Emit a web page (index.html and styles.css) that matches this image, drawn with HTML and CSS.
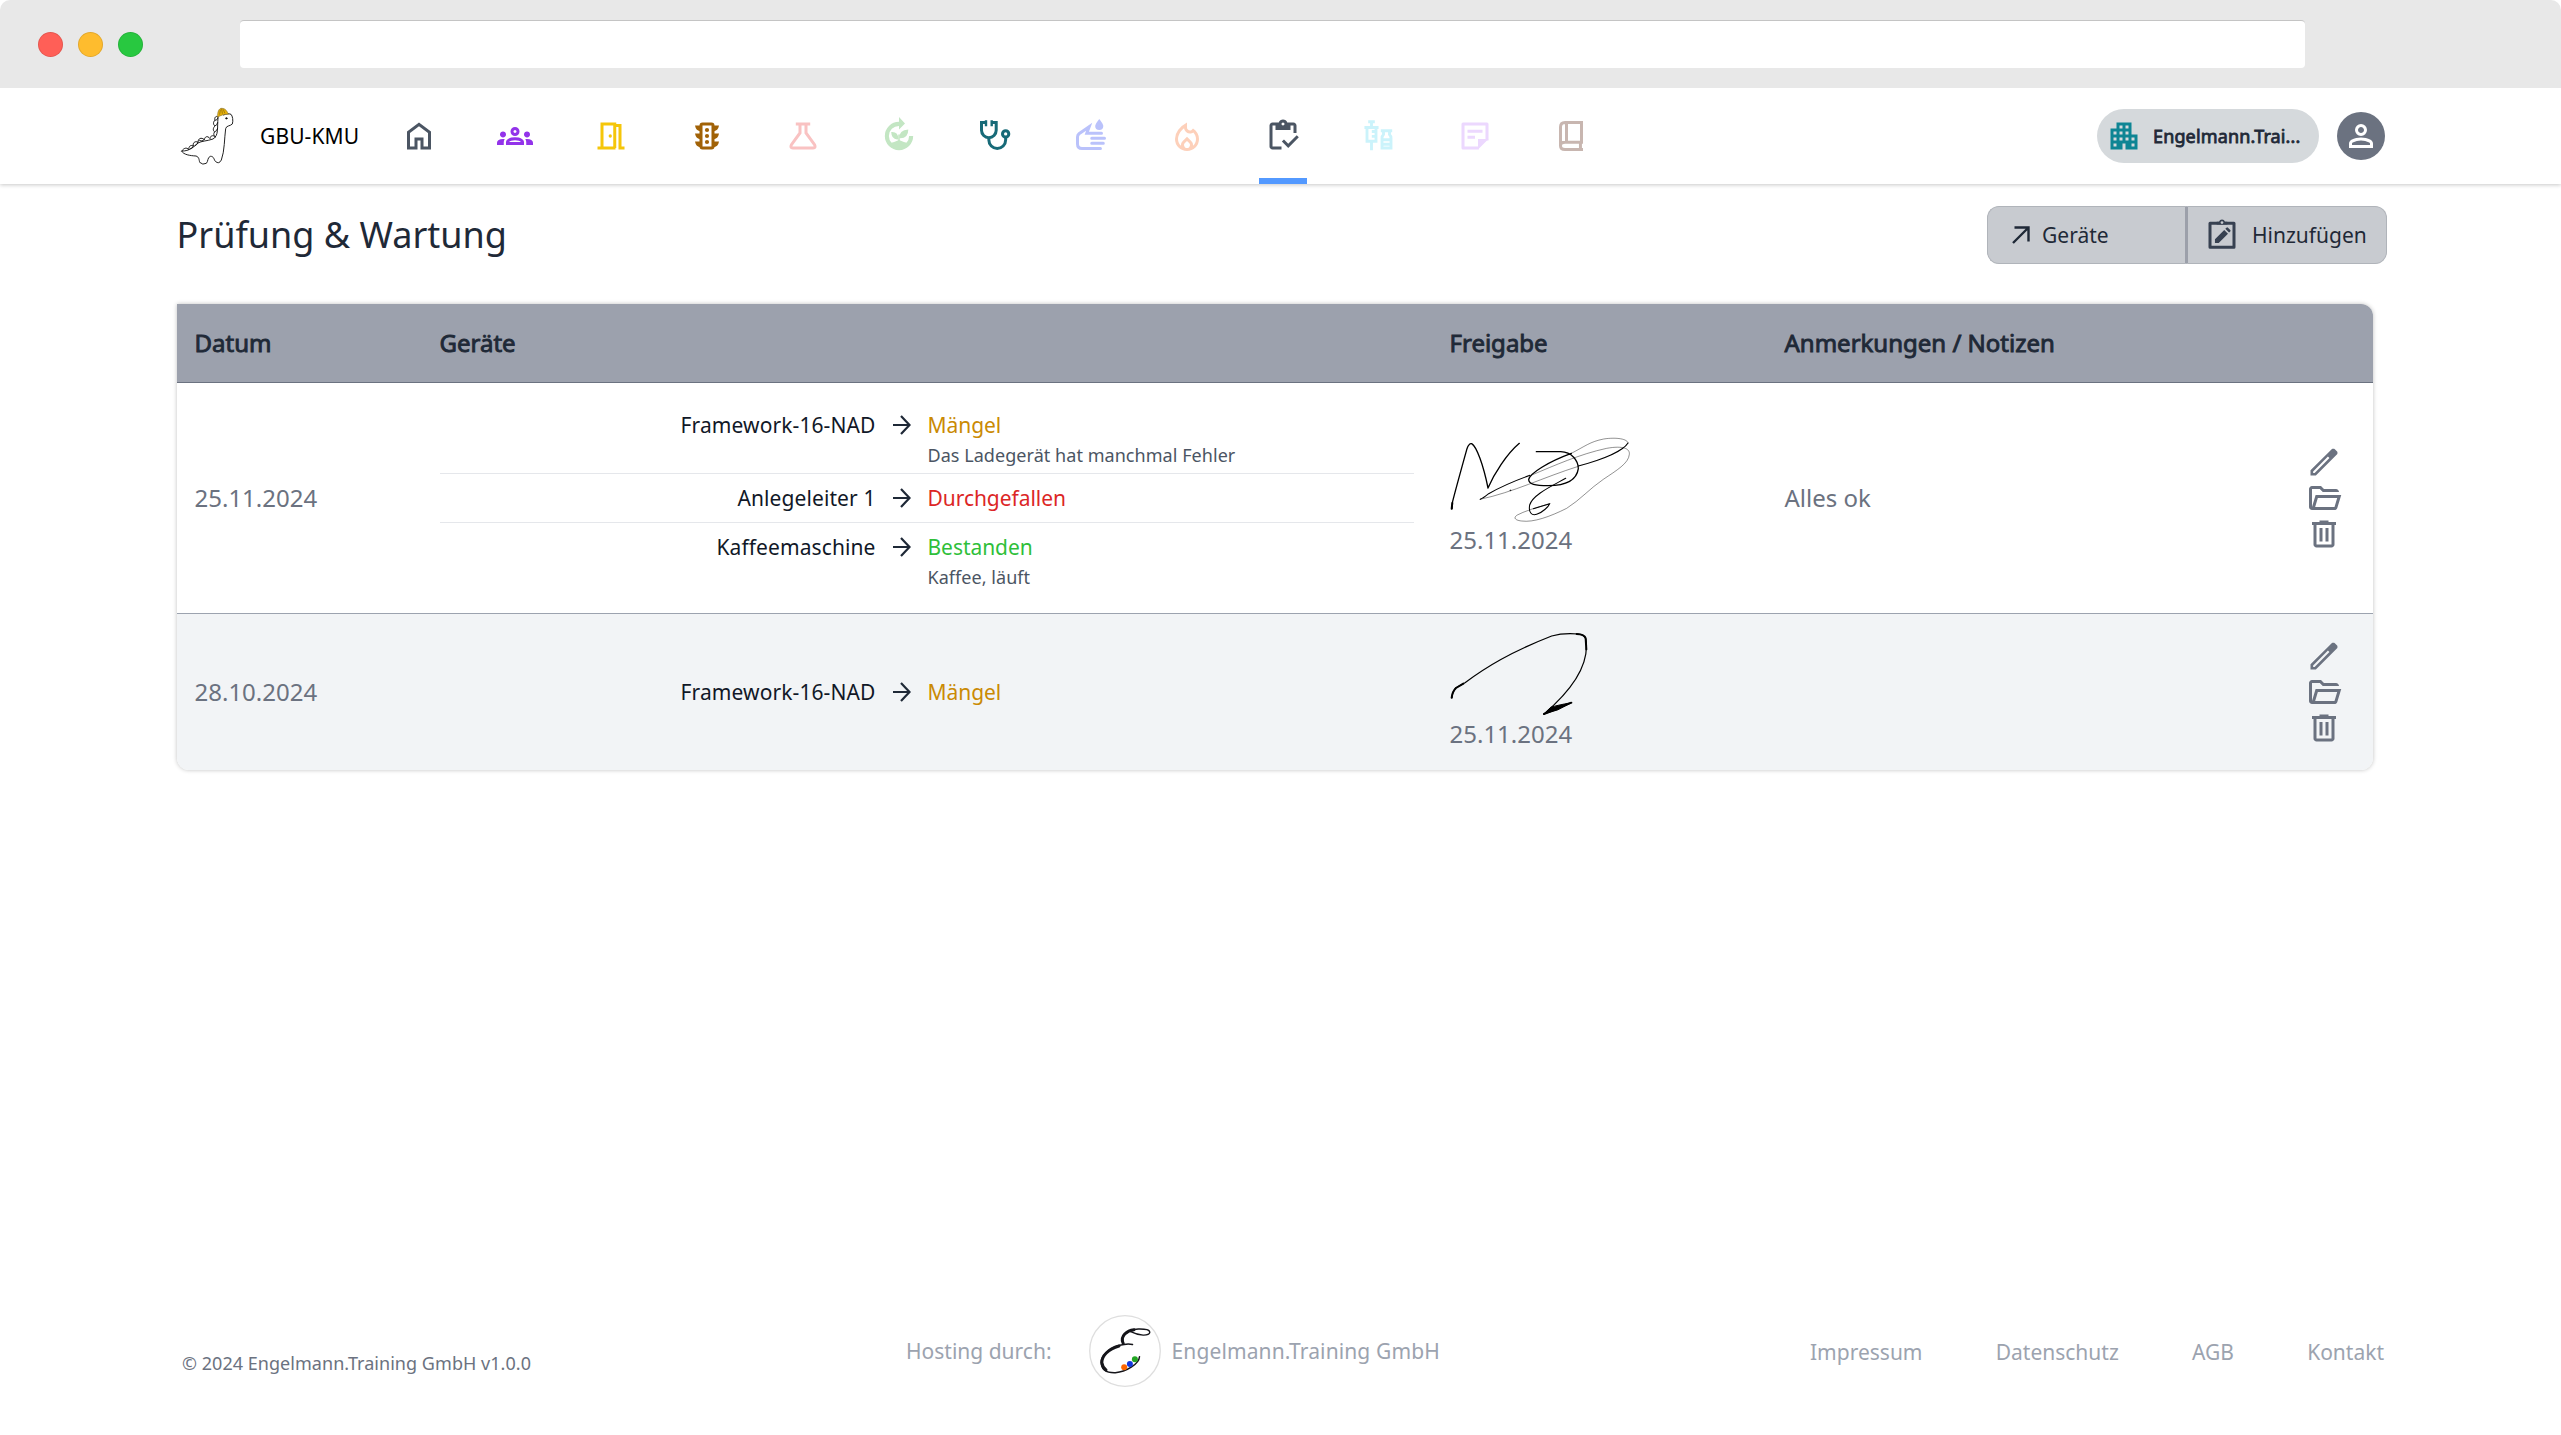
FILE: index.html
```html
<!DOCTYPE html>
<html lang="de">
<head>
<meta charset="utf-8">
<title>GBU-KMU – Prüfung &amp; Wartung</title>
<link rel="stylesheet" href="styles.css">
</head>
<body>
<svg class="sprite" aria-hidden="true">
  <symbol id="pencil" viewBox="0 -960 960 960"><path fill-rule="evenodd" d="M190-190h40l395-395-40-40-395 395v40Zm-70 70v-142l565-557q8-8 19-12.500t23-4.500q11 0 22 4.500t20 12.500l54 54q9 9 13 20t4 22q0 11-4.500 22.500T823-679L263-120H120Z"/></symbol>
  <symbol id="folder" viewBox="0 -960 960 960"><path d="M160-160q-33 0-56.500-23.500T80-240v-480q0-33 23.500-56.500T160-800h240l80 80h320q33 0 56.500 23.500T880-640H447l-80-80H160v480l96-320h684L837-217q-8 26-29.500 41.500T760-160H160Zm84-80h516l72-240H316l-72 240Z"/></symbol>
  <symbol id="trash" viewBox="0 -960 960 960"><path d="M280-120q-33 0-56.500-23.500T200-200v-520h-40v-80h200v-40h240v40h200v80h-40v520q0 33-23.500 56.500T680-120H280Zm400-600H280v520h400v-520ZM360-280h80v-360h-80v360Zm160 0h80v-360h-80v360Z"/></symbol>
  <symbol id="arrow" viewBox="0 0 18 20"><path class="outline" d="M0 10h16.500M8 1l8.500 9L8 19" stroke="currentColor" stroke-width="2.200"/></symbol>
</svg>
<div class="window">
  <div class="chrome">
    <div class="lights"><span class="red"></span><span class="yellow"></span><span class="green"></span></div>
    <div class="address"></div>
  </div>

  <header class="nav">
    <svg class="dino outline" viewBox="30 24 162 180" stroke="#111" stroke-width="2.800" stroke-linejoin="round" stroke-linecap="round">
      <path d="M144 60C141 90 147 112 129 123C112 129 94 129 84 135C72 146 58 160 35 159C40 170 60 173 78 174C88 177 87 186 89 193Q98 202 109 196C115 190 112 178 121 175C132 174 132 186 136 190Q147 200 154 186C164 160 163 120 167 92C169 82 180 85 187 78C190 68 188 54 183 49C176 46 168 47 161 51"/>
      <path d="M144 56C138 52 132 59 135 67C129 71 129 80 135 84C129 89 128 98 134 102C129 107 132 116 137 117C128 110 121 113 120 122C112 111 104 117 103 125C94 117 84 121 84 133C75 127 67 136 70 144C61 139 55 147 57 155C49 147 42 150 35 159M135 67C141 67 144 62 144 57M135 84Q142 82 143 74M134 102Q141 99 143 91M103 125Q96 132 89 128M84 133Q82 141 75 143M70 144Q68 152 62 152"/>
      <path fill="#eab308" stroke="#8a7433" stroke-width="2" d="M143 57C142 42 147 30 155 31C167 31 172 41 175 49C162 47 154 52 143 57Z"/>
      <path stroke="#7c6114" stroke-width="2" d="M149 49l2-13M157 46l-2-13M164 44l-4-9"/>
      <circle cx="169" cy="61" r="2" fill="#111"/>
    </svg>
    <span class="brand">GBU-KMU</span>
    <nav class="menu">
      <a class="c-slate"><svg viewBox="0 -960 960 960"><path d="M240-200h120v-240h240v240h120v-360L480-740 240-560v360Zm-80 80v-480l320-240 320 240v480H520v-240h-80v240H160Z"/></svg></a>
      <a class="c-purple"><svg viewBox="0 -960 960 960"><path d="M0-240v-63q0-43 44-70t116-27q13 0 25 .500t23 2.500q-14 21-21 44t-7 48v65H0Zm240 0v-65q0-32 17.500-58.500T307-410q32-20 76.500-30t96.500-10q53 0 97.500 10t76.500 30q32 20 49 46.500t17 58.500v65H240Zm540 0v-65q0-26-6.500-49T754-397q11-2 22.500-2.500t23.500-.500q72 0 116 26.500t44 70.500v63H780Zm-455-80h311q-10-20-55.500-35T480-370q-55 0-100.500 15T325-320ZM160-440q-33 0-56.500-23.500T80-520q0-34 23.500-57t56.500-23q34 0 57 23t23 57q0 33-23 56.500T160-440Zm640 0q-33 0-56.500-23.500T720-520q0-34 23.500-57t56.500-23q34 0 57 23t23 57q0 33-23 56.500T800-440Zm-320-40q-50 0-85-35t-35-85q0-51 35-85.500t85-34.500q51 0 85.500 34.500T600-600q0 50-34.500 85T480-480Zm0-80q17 0 28.500-11.500T520-600q0-17-11.500-28.500T480-640q-17 0-28.500 11.500T440-600q0 17 11.500 28.500T480-560Z"/></svg></a>
      <a class="c-yellow"><svg class="line" viewBox="0 0 24 24"><path d="M3 20h12M6 20V4h8.500v16M14.500 5H18v15h3"/><circle class="dot" cx="11.500" cy="12" r="1.100"/></svg></a>
      <a class="c-brown"><svg class="line" viewBox="0 0 24 24"><rect x="8" y="4" width="8" height="16" rx="1"/><path class="dot" d="M4 5h4v4Q4.500 8.500 4 5ZM4 10.300h4v4Q4.500 13.800 4 10.300ZM4 15.600h4v4Q4.500 19.100 4 15.600ZM20 5h-4v4Q19.500 8.500 20 5ZM20 10.300h-4v4Q19.500 13.800 20 10.300ZM20 15.600h-4v4Q19.500 19.100 20 15.600Z"/><circle class="dot" cx="12" cy="8" r="1.400"/><circle class="dot" cx="12" cy="12" r="1.400"/><circle class="dot" cx="12" cy="16" r="1.400"/></svg></a>
      <a class="c-pink"><svg class="line" viewBox="0 0 24 24"><path d="M7.200 4h9.600M10 4v6L4.300 17.800Q3.300 20 5.200 20h13.600Q20.700 20 19.700 17.800L14 10V4"/></svg></a>
      <a class="c-green"><svg class="line" viewBox="0 0 24 24"><path d="M12 3.900A8.100 8.100 0 1 0 20.100 12" stroke-width="2.700"/><path class="dot" d="M12-.6L16 3.600 12 7.700ZM5 17Q9 16 12 14.600Q15 16 19 17Q16 21 12 21T5 17ZM11.600 14.200Q7 14.800 6.800 9.400Q11.600 9 11.600 14.200ZM12.200 13.400Q11.900 8 18.200 7.600Q18.200 13.800 12.200 13.400Z"/><path d="M12 11v5" stroke-width="1"/></svg></a>
      <a class="c-teal"><svg class="line" viewBox="0 0 24 24"><path d="M6.600 3H3v5.200a4.900 4.900 0 0 0 9.800 0V3H9.300M7.900 13v1.700a5.600 5.600 0 0 0 11.200 0V12.500"/><path d="M6 1.500v4M9.800 1.500v4" stroke-width="1.600"/><circle cx="19.100" cy="10.600" r="2.100"/></svg></a>
      <a class="c-indigo"><svg class="line" viewBox="0 0 24 24" stroke-linecap="round"><path d="M18.300 20.400H6q-3 0-3-3v-4.700q0-1.400 1-2.200L10.800 5.800 9.200 10.100H19M12.500 13.500H21M12.500 16.900H20.200"/><path class="dot" d="M17.500.6Q20.200 4 20.200 5.300A2.700 2.700 0 0 1 14.800 5.300Q14.800 4 17.500.6Z"/></svg></a>
      <a class="c-orange"><svg viewBox="0 -960 960 960"><path d="M240-400q0 52 21 98.500t60 81.500q-1-5-1-9v-9q0-32 12-60t35-51l113-111 113 111q23 23 35 51t12 60v9q0 4-1 9 39-35 60-81.500t21-98.500q0-50-18.500-94.500T648-574q-20 13-42 19.500t-45 6.500q-62 0-107.500-41T401-690q-39 33-69 68.500t-50.500 72Q261-513 250.500-475T240-400Zm240 52-57 56q-11 11-17 25t-6 29q0 32 23.500 55t56.500 23q33 0 56.500-23t23.500-55q0-16-6-29.500T537-292l-57-56Zm0-492v132q0 34 23.500 57t57.500 23q18 0 33.500-7.500T622-658l18-22q74 42 117 117t43 163q0 134-93 227T480-80q-134 0-227-93t-93-227q0-129 86.500-245T480-840Z"/></svg></a>
      <a class="c-slate active"><svg viewBox="0 -960 960 960"><path d="M620-163 450-333l56-56 114 114 226-226 56 56-282 282Zm220-397h-80v-200h-80v120H280v-120h-80v560h240v80H200q-33 0-56.500-23.500T120-200v-560q0-33 23.500-56.500T200-840h167q11-35 43-57.500t70-22.500q40 0 71.500 22.500T594-840h166q33 0 56.500 23.500T840-760v200ZM480-760q17 0 28.500-11.500T520-800q0-17-11.500-28.500T480-840q-17 0-28.500 11.500T440-800q0 17 11.500 28.500T480-760Z"/></svg></a>
      <a class="c-cyan"><svg class="line" viewBox="0 0 24 24"><path d="M4.800 2.500h4.400M7 2.500V6M2.300 6.300h9.400M4 6.300v9.200h6V6.300M7 15.500v6M10 9H7.200M10 12.200H7.200M13.200 8.500h7.600M15 9v2q-1 1-1 2.300V20h6v-6.700q0-1.300-1-2.300V9M14 14.500h6M14 17.500h6" stroke-width="1.900"/></svg></a>
      <a class="c-lilac"><svg class="line" viewBox="0 0 24 24"><path d="M14.500 20H4V4h16v11" stroke-linejoin="round"/><path class="dot" d="M14 21v-7h7z"/><path d="M7 8.800h10M7 12.800h5"/></svg></a>
      <a class="c-taupe"><svg class="line" viewBox="0 0 24 24"><path d="M20 3H8Q5 3 5 6v12.500Q5 21 8 21h12M9 3v13M19 3v13.200M20 16.200H8Q5 16.200 5 18.500M18.300 16v5"/></svg></a>
    </nav>
    <div class="company">
      <svg viewBox="0 -960 960 960"><path d="M120-120v-560h160v-160h400v320h160v400H520v-160h-80v160H120Zm80-80h80v-80h-80v80Zm0-160h80v-80h-80v80Zm0-160h80v-80h-80v80Zm160 160h80v-80h-80v80Zm0-160h80v-80h-80v80Zm0-160h80v-80h-80v80Zm160 320h80v-80h-80v80Zm0-160h80v-80h-80v80Zm0-160h80v-80h-80v80Zm160 480h80v-80h-80v80Zm0-160h80v-80h-80v80Z"/></svg>
      <span>Engelmann.Trai...</span>
    </div>
    <div class="avatar"><svg viewBox="0 -960 960 960"><path d="M480-480q-66 0-113-47t-47-113q0-66 47-113t113-47q66 0 113 47t47 113q0 66-47 113t-113 47ZM160-160v-112q0-34 17.500-62.500T224-378q62-31 126-46.500T480-440q66 0 130 15.500T736-378q29 15 46.500 43.500T800-272v112H160Zm80-80h480v-32q0-11-5.500-20T700-306q-54-27-109-40.500T480-360q-56 0-111 13.500T260-306q-9 5-14.500 14t-5.500 20v32Zm240-320q33 0 56.500-23.500T560-640q0-33-23.500-56.500T480-720q-33 0-56.500 23.500T400-640q0 33 23.500 56.500T480-560Z"/></svg></div>
  </header>

  <div class="titlebar">
    <h1>Prüfung &amp; Wartung</h1>
    <div class="actions">
      <button class="devices"><svg class="outline" viewBox="0 0 18 18" stroke="currentColor" stroke-width="2.400"><path d="M1 17L16 2M2.500 1.500H16.500V15.500"/></svg>Geräte</button>
      <button class="add"><svg viewBox="0 0 24 24"><path class="outline" d="M4 4.200h16v16h-16z" stroke="currentColor" stroke-width="2" stroke-linejoin="round"/><path d="M8.500 5V3.200h1.500a2.100 2.100 0 0 1 4 0H15.500V5z"/><circle cx="12" cy="3.700" r=".9" fill="#c8cbd0"/><path d="M7.300 17.300v-2.500L13.500 8.600l2.500 2.500-6.200 6.200zM14.200 7.900l.8-.8q.5-.5 1 0l1.500 1.500q.5.500 0 1l-.8.800z"/></svg>Hinzufügen</button>
    </div>
  </div>

  <main class="table">
    <div class="row head"><div>Datum</div><div>Geräte</div><div>Freigabe</div><div>Anmerkungen / Notizen</div><div></div></div>
    <div class="row">
      <div>25.11.2024</div>
      <div class="items">
        <div class="item noted"><span class="name">Framework-16-NAD</span><svg><use href="#arrow"/></svg><span class="state warn">Mängel</span><span class="note">Das Ladegerät hat manchmal Fehler</span></div>
        <div class="item"><span class="name">Anlegeleiter 1</span><svg><use href="#arrow"/></svg><span class="state fail">Durchgefallen</span></div>
        <div class="item noted"><span class="name">Kaffeemaschine</span><svg><use href="#arrow"/></svg><span class="state pass">Bestanden</span><span class="note">Kaffee, läuft</span></div>
      </div>
      <div class="sign">
        <svg class="outline" viewBox="90 114 600 252" stroke="#000" stroke-linecap="round" stroke-linejoin="round">
          <path stroke-width="4" d="M96 326L97 308C104 280 119 225 141 146Q147 129 155 131C170 140 190 195 204 264C222 222 260 162 298 130M349 155L422 155C455 156 475 181 475 206C470 240 442 257 385 257C345 257 326 253 326 238C330 220 385 185 454 160"/>
          <path stroke-width="6" d="M95 326L97 309"/>
          <path stroke-width="1.300" d="M454 160C495 139 510 125 551 117C590 111 624 117 624 129M180 298C280 277 370 232 475 199M340 223C400 198 480 162 560 145C610 136 630 146 628 163C626 190 590 211 550 238C510 265 480 300 440 325C390 350 340 368 305 363C285 361 279 353 292 345Q320 330 390 311"/>
          <path stroke-width="3.200" d="M624 129C610 152 550 178 475 198M181 298Q190 294 206 281Q260 251 330 226M437 235C390 261 338 285 329 315C325 337 335 348 350 343C370 336 385 320 389 311L340 326"/>
          <circle cx="271" cy="271" r="1.500" fill="#000"/>
        </svg>
        <span>25.11.2024</span>
      </div>
      <div>Alles ok</div>
      <div class="tools"><svg><use href="#pencil"/></svg><svg><use href="#folder"/></svg><svg><use href="#trash"/></svg></div>
    </div>
    <div class="row alt">
      <div>28.10.2024</div>
      <div class="items">
        <div class="item"><span class="name">Framework-16-NAD</span><svg><use href="#arrow"/></svg><span class="state warn">Mängel</span></div>
      </div>
      <div class="sign">
        <svg class="outline" viewBox="90 696 600 252" stroke="#000" stroke-linecap="round" stroke-linejoin="round">
          <path stroke-width="3.600" d="M96 893Q97 875 108 863L135 848C200 800 270 757 395 708Q430 698 475 702Q500 704 499 730C504 800 450 875 372 942"/>
          <path stroke-width="6" d="M95 893Q97 875 108 864L130 851M470 702Q494 703 497 715L499 748M454 908L372 942"/>
          <path fill="#000" stroke-width="3" d="M454 908Q410 916 392 922L372 942L412 930Z"/>
        </svg>
        <span>25.11.2024</span>
      </div>
      <div></div>
      <div class="tools"><svg><use href="#pencil"/></svg><svg><use href="#folder"/></svg><svg><use href="#trash"/></svg></div>
    </div>
  </main>

  <footer class="footer">
    <div class="copy">© 2024 Engelmann.Training GmbH v1.0.0</div>
    <div class="host">
      <span>Hosting durch:</span>
      <svg class="outline" viewBox="0 0 72 72" stroke="#15151a" stroke-linecap="round">
        <circle cx="36" cy="36" r="35.300" stroke="#dedede" stroke-width="1.300"/>
        <path stroke-width="1.500" d="M43.500 29.500Q39 28.500 35.200 29.500C22 31 12.200 40 12.200 47.500C12.500 55 18 58 26.400 57.700C37 57 50 49 50.500 41.700"/>
        <path stroke-width="3" d="M30 31C19 34 12.800 41 12.800 47.500Q13.500 52.500 17 55M34 28C31 21 38 15.500 45 14.700"/>
        <path stroke-width="1.300" d="M35 29C31 21 38 14.500 49.300 14C57 13.800 60.800 15 60.800 17.500C60 21 50 21 41.700 16.700"/>
        <g stroke="none"><circle cx="35.200" cy="52.300" r="3" fill="#f60"/><circle cx="40.900" cy="49" r="3" fill="#1238e0"/><circle cx="45.900" cy="44.300" r="3" fill="#22a522"/></g>
      </svg>
      <span class="firm">Engelmann.Training GmbH</span>
    </div>
    <div class="links"><a>Impressum</a><a>Datenschutz</a><a>AGB</a><a>Kontakt</a></div>
  </footer>
</div>
</body>
</html>
```
FILE: styles.css
```css
* { box-sizing: border-box; }
body {
  margin: 0;
  background: #fff;
  font-family: "Noto Sans", sans-serif;
  font-size: 24px;
  line-height: 36px;
  color: #1f2937;
}
svg { display: block; fill: currentColor; flex: none; }
.outline { fill: none; }
.sprite { position: absolute; width: 0; height: 0; }
.window {
  width: 2561px;
  height: 1435px;
  display: flex;
  flex-direction: column;
  overflow: hidden;
  border-radius: 10px;
}

/* browser frame */
.chrome {
  position: relative;
  z-index: 1;
  height: 88px;
  flex: none;
  background: #e8e8e8;
  display: flex;
  align-items: center;
  padding-left: 37.5px;
}
.lights { display: flex; gap: 15px; width: 202.5px; }
.lights span { width: 25px; height: 25px; border-radius: 50%; border: 1px solid rgba(0, 0, 0, .1); }
.red { background: #ff5f57; }
.yellow { background: #febc2e; }
.green { background: #28c840; }
.address { width: 2065px; height: 48px; background: #fff; border-radius: 4px; border-top: 1px solid #c4c4c4; }

/* navigation */
.nav {
  height: 96px;
  flex: none;
  display: flex;
  align-items: center;
  padding: 0 176px 0 180px;
  box-shadow: 0 1px 4px rgba(0, 0, 0, .22);
}
.dino { width: 54px; height: 60px; }
.brand { font-size: 21px; color: #000; margin-left: 26px; width: 135px; letter-spacing: .1px; }
.menu { display: flex; gap: 48px; height: 96px; }
.menu a { width: 48px; display: flex; align-items: center; justify-content: center; border-top: 6px solid transparent; border-bottom: 6px solid transparent; }
.menu svg { width: 36px; height: 36px; }
.menu .active { border-bottom-color: #5399ff; }
.line { fill: none; stroke: currentColor; stroke-width: 2; overflow: visible; }
.line .dot { fill: currentColor; stroke: none; }
.c-slate { color: #4b5563; }
.c-purple { color: #9333ea; }
.c-yellow { color: #f5c60a; }
.c-brown { color: #a16207; }
.c-pink { color: #f9c2c2; }
.c-green { color: #c3e6c3; }
.c-teal { color: #176a78; }
.c-indigo { color: #bac2fb; }
.c-orange { color: #fdd0ba; }
.c-cyan { color: #cbf3fb; }
.c-lilac { color: #ecd8fe; }
.c-taupe { color: #c8b6b0; }
.company {
  margin-left: auto;
  width: 222px;
  height: 54px;
  border-radius: 27px;
  background: #d5d9dc;
  display: flex;
  align-items: center;
  gap: 11px;
  padding-left: 9px;
  font-size: 18px;
  letter-spacing: .14px;
  -webkit-text-stroke: .8px;
}
.company svg { width: 36px; height: 36px; color: #0e8594; }
.avatar {
  margin-left: 18px;
  width: 48px;
  height: 48px;
  border-radius: 50%;
  background: #6b7280;
  color: #fff;
  display: flex;
  align-items: center;
  justify-content: center;
}
.avatar svg { width: 36px; height: 36px; }

/* page title */
.titlebar {
  display: flex;
  justify-content: space-between;
  align-items: center;
  height: 58px;
  flex: none;
  margin: 22px 174px 40px 176.5px;
}
h1 { margin: 0; font-size: 36px; font-weight: 400; }
.actions { display: flex; height: 58px; }
.actions button {
  display: flex;
  align-items: center;
  width: 200px;
  padding: 0 0 0 24px;
  background: #c8cbd0;
  border: 1px solid #b0b4ba;
  font: 21px/30px "Noto Sans", sans-serif;
  color: #1f2937;
}
.actions .devices { border-radius: 12px 0 0 12px; border-right: 2px solid #9ca0aa; gap: 12px; }
.actions .add { border-radius: 0 12px 12px 0; border-left: 1px solid #9ca0aa; padding-left: 16px; gap: 12px; }
.devices svg { width: 18px; height: 18px; }
.add svg { width: 36px; height: 36px; color: #374151; }

/* inspections table */
.table {
  width: 2196px;
  flex: none;
  margin-left: 177px;
  border-radius: 0 12px 12px 12px;
  overflow: hidden;
  box-shadow: 0 0 4px rgba(0, 0, 0, .25);
}
.row {
  display: grid;
  grid-template-columns: 245px 1010px 335px 507px 65px;
  padding-left: 17.5px;
  height: 231px;
  align-items: center;
  color: #6b7280;
  border-bottom: 1px solid #9ca3af;
}
.head {
  height: 79px;
  background: #9ca1ad;
  border-bottom-color: #6b7280;
  color: #1f2937;
  -webkit-text-stroke: .9px;
}
.alt { height: 156px; background: #f2f4f6; border-bottom: 0; }
.items { width: 974px; font-size: 21px; line-height: 30px; color: #111827; }
.item {
  display: grid;
  grid-template-columns: 436px 18px 1fr;
  column-gap: 17px;
  align-items: center;
  padding: 9px 0;
  border-bottom: 1px solid #e5e7eb;
}
.item:last-child { border-bottom: 0; }
.item svg { width: 18px; height: 20px; color: #1f2937; }
.noted { padding-bottom: 3px; }
.name { text-align: right; letter-spacing: .1px; }
.note { grid-column: 3; font-size: 18px; color: #4b5563; letter-spacing: .05px; }
.state { letter-spacing: -.05px; }
.warn { color: #ca8a04; }
.fail { color: #dc2626; }
.pass { color: #2fbf3a; }
.sign svg { width: 200px; height: 84px; overflow: visible; }
.sign span { display: block; }
.tools { justify-self: center; }
.tools svg { width: 36px; height: 36px; }

/* footer */
.footer {
  margin-top: auto;
  height: 84px;
  margin-bottom: 42px;
  flex: none;
  display: grid;
  grid-template-columns: 724px 904px 1fr;
  padding: 0 177px 0 182px;
  align-items: center;
  font-size: 21px;
  color: #9ca3af;
}
.copy { font-size: 18px; color: #6b7280; padding-top: 24px; letter-spacing: .04px; }
.host { display: flex; align-items: center; gap: 11px; }
.host svg { width: 72px; height: 72px; margin-left: 26px; }
.firm { letter-spacing: .12px; }
.links { display: flex; justify-content: space-between; padding-top: 2px; }
```
